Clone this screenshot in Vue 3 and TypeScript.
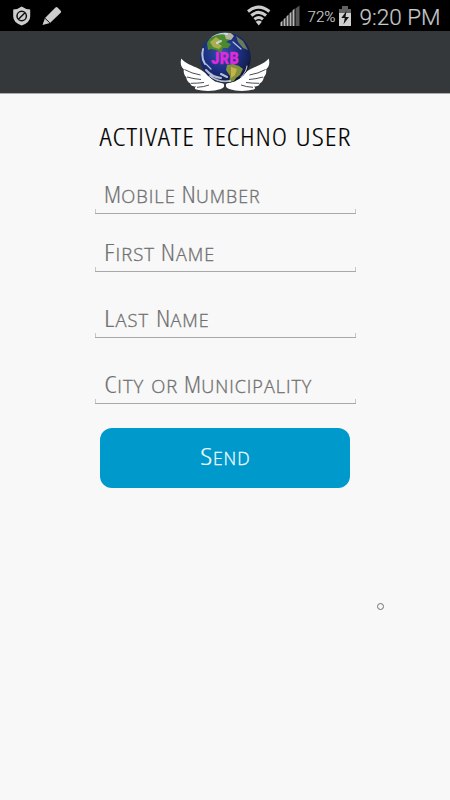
<script setup lang="ts">
interface Run {
    text: string;
    x: number;
    width: number;
    small?: boolean;
}

interface Field {
    name: string;
    label: string;
    runs: Run[];
}

// x and width are relative to the left edge of the field
const fields: Field[] = [
    {
        name: "mobile",
        label: "Mobile Number",
        runs: [
            { text: "M", x: 9, width: 17 },
            { text: "obile", x: 26.3, width: 54.5, small: true },
            { text: "N", x: 86.5, width: 14.3 },
            { text: "umber", x: 101, width: 64.5, small: true },
        ],
    },
    {
        name: "first",
        label: "First Name",
        runs: [
            { text: "F", x: 9, width: 10.5 },
            { text: "irst", x: 20.5, width: 39.5, small: true },
            { text: "N", x: 65.8, width: 14.3 },
            { text: "ame", x: 81, width: 39, small: true },
        ],
    },
    {
        name: "last",
        label: "Last Name",
        runs: [
            { text: "L", x: 9, width: 10.5 },
            { text: "ast", x: 20.5, width: 33.5, small: true },
            { text: "N", x: 61, width: 14.3 },
            { text: "ame", x: 75.5, width: 39, small: true },
        ],
    },
    {
        name: "city",
        label: "City or Municipality",
        runs: [
            { text: "C", x: 9.3, width: 12.5 },
            { text: "ity", x: 22.3, width: 27, small: true },
            { text: "or", x: 56.3, width: 27, small: true },
            { text: "M", x: 89, width: 17 },
            { text: "unicipality", x: 106.3, width: 111, small: true },
        ],
    },
];

const title: Run[] = [
    { text: "ACTIVATE", x: 4.5, width: 95.5 },
    { text: "TECHNO", x: 108.5, width: 84.5 },
    { text: "USER", x: 200.5, width: 56 },
];

const send: Run[] = [
    { text: "S", x: 100.3, width: 12 },
    { text: "end", x: 113, width: 37.5, small: true },
];
</script>

<template>
    <div class="screen">
        <div class="status">
            <svg class="notices" width="70" height="31" viewBox="0 0 70 31">
                <path d="M21.7 6.5q4 3 8.5 3v7q0 6-8.5 9q-8.500-3-8.500-9v-7q4.500 0 8.500-3z" fill="#cdcdcd" />
                <circle cx="21.7" cy="16" r="4.7" fill="none" stroke="#101010" stroke-width="1.5" />
                <path d="M18.4 19.3l6.6-6.6" stroke="#101010" stroke-width="1.5" />
                <path d="M42.5 25l2.5-7 10.500-10.500q1-.8 2 0l3.200 3.200q1 1 0 2L50 23z" fill="#cdcdcd" />
                <path d="M45 18.3l4.800 4.500" stroke="#111" stroke-width="1" />
            </svg>
            <svg class="signals" width="60" height="31" viewBox="0 0 60 31">
                <g fill="none" stroke="#cdcdcd" stroke-width="3">
                    <path d="M3 11.500q10.700-8.800 21.400 0" />
                    <path d="M6.300 15.500q7.400-6.300 14.800 0" />
                    <path d="M9.500 19.300q4.200-3.600 8.400 0" />
                </g>
                <path d="M10.700 21.700q3.100-2.300 6.200 0L13.800 25.500z" fill="#cdcdcd" />
                <g fill="#b8b8b8">
                    <path d="M35.500 26v-3.500l2-2V26zM38.500 26v-6.500l2-2V26zM41.500 26v-9.500l2-2V26zM44.500 26V13.500l2-2V26zM47.500 26V10.500l2-2V26z" />
                    <path d="M50.500 26V8.500L54.500 5.500V26z" fill="#555" />
                </g>
            </svg>
            <svg class="readout" width="150" height="31" viewBox="0 0 150 31">
                <text x="7.5" y="22" font-size="14.5" textLength="28" lengthAdjust="spacingAndGlyphs">72%</text>
                <path d="M42 6h6v3h-6zM39 9h12v4H39z" fill="#626262" />
                <path d="M39 13h12v13H39z" fill="#d0d0d0" />
                <path d="M46.500 11l-5.200 7h3.500l-1.300 6.300 5.500-7.400h-3.500z" fill="#111" />
                <text x="59.5" y="25" font-size="22.7" textLength="81" lengthAdjust="spacingAndGlyphs">9:20 PM</text>
            </svg>
        </div>

        <header class="bar">
            <svg width="90" height="62" viewBox="180 31 90 62">
                <defs>
                    <radialGradient id="sea" cx="42%" cy="38%" r="64%">
                        <stop offset="0" stop-color="#3450a5" />
                        <stop offset="0.6" stop-color="#1b2e80" />
                        <stop offset="0.88" stop-color="#152150" />
                        <stop offset="1" stop-color="#0a1030" />
                    </radialGradient>
                    <clipPath id="disc"><circle cx="225.5" cy="57.5" r="25" /></clipPath>
                    <g id="wing">
                        <path
                            d="M181.300 58.500c4 5 10 6.500 18 10.500c6 3 11 9 15 12c4 2 8 1.500 9.500 3c1 2 0 4-3 5c-7 2.500-17 2.500-24.500.5c-2-.7-2-2 0-3c-3 .3-6-1.200-6-3.300c-2-.7-4-3-4-6c-2-2-3-4.500-2.500-8c-3-2.500-3.800-6-2.500-10.700z"
                            fill="#fff"
                        />
                        <path d="M184.500 69.500q7 4 16 5.500M187 77q7 2 14 2.500M191 83.300q7 0 13-.8M197 87.300q7-.3 12-2.300" fill="none" stroke="#34383b" stroke-width=".9" />
                    </g>
                </defs>
                <use href="#wing" />
                <use href="#wing" transform="matrix(-1 0 0 1 450 0)" />
                <path d="M225 83v8" stroke="#34383b" stroke-width="1.5" />
                <circle cx="225.5" cy="57.5" r="25.3" fill="url(#sea)" />
                <g clip-path="url(#disc)">
                    <path d="M207 43l3-5 6-4 9-2 6 2 0 5-5 3 5 2-3 4-5 0-2 5-5-3-5-1-3 1z" fill="#4e8a30" />
                    <path d="M210 42l6-5 4 3-2 3 4 3-3 3-6-2z" fill="#a9ad50" />
                    <path d="M224 33l6-1 4 4-3 4-5-1z" fill="#b4b59a" />
                    <path d="M236 36l7 5 5 9-5-2-5-6z" fill="#6b7c58" />
                    <path d="M227 65l6-1 6 2 4 3-3 6-4 3-4 6-3 0 1-8-4-6z" fill="#82933c" />
                    <path d="M231 67l6 2-2 6-4 3z" fill="#c5b34a" />
                    <g fill="none" stroke="#dce7f2" stroke-linecap="round" opacity=".8">
                        <path d="M203 49q-2 9 2 15M206 70q6 7 15 8M210 76q9 7 20 5" stroke-width="2" />
                        <path d="M212 36q7-4 15-2M217 43l4-2M221 74l6 3" stroke-width="2" />
                        <path d="M233 42l8 7M241 77q5-4 6-11M206 64l5 5" stroke-width="1.2" />
                    </g>
                </g>
                <text class="logo" x="211.3" y="63.5" textLength="28" lengthAdjust="spacingAndGlyphs">JRB</text>
            </svg>
        </header>

        <main class="content">
            <h1 class="title" aria-label="Activate Techno User">
                <svg width="261" height="34">
                    <text v-for="run in title" :key="run.text" :x="run.x" y="25" :textLength="run.width" lengthAdjust="spacingAndGlyphs">{{ run.text }}</text>
                </svg>
            </h1>
            <form class="form" @submit.prevent>
                <div v-for="field in fields" :key="field.name" class="field" :class="field.name" :aria-label="field.label">
                    <svg width="261" height="29">
                        <text
                            v-for="run in field.runs"
                            :key="run.x"
                            :class="{ small: run.small }"
                            :x="run.x"
                            y="19"
                            :textLength="run.width"
                            lengthAdjust="spacingAndGlyphs"
                        >{{ run.text }}</text>
                    </svg>
                </div>
                <button class="send" type="submit">
                    <svg width="250" height="60">
                        <text v-for="run in send" :key="run.x" :class="{ small: run.small }" :x="run.x" y="37" :textLength="run.width" lengthAdjust="spacingAndGlyphs">{{ run.text }}</text>
                    </svg>
                </button>
            </form>
            <span class="dot"></span>
        </main>
    </div>
</template>

<style>
body {
    margin: 0;
}
</style>

<style scoped>
.screen {
    width: 450px;
    height: 800px;
    display: flex;
    flex-direction: column;
    overflow: hidden;
    background: #f8f8f8;
    font-family: "Open Sans", "Noto Sans", sans-serif;
}

svg {
    display: block;
    overflow: visible;
}

.status {
    height: 31px;
    display: flex;
    background: #000;
}

.signals {
    margin-left: 175px;
}

.readout {
    margin-left: -5px;
    fill: #c9c9c9;
    font-family: Roboto, sans-serif;
    font-weight: 300;
    stroke-width: 0.2px;
}

.readout text {
    stroke: #c9c9c9;
}

.bar {
    height: 62px;
    flex: none;
    display: flex;
    justify-content: center;
    background: #34383b;
    border-bottom: 1px solid #aaacad;
}

.logo {
    fill: #e22be1;
    stroke: #d32ad4;
    stroke-width: 0.4px;
    font: 900 17px Roboto, sans-serif;
    letter-spacing: 0.6px;
}

.content {
    display: flex;
    flex-direction: column;
    align-items: center;
}

.title {
    margin: 27px 0 0;
    font-size: 25.5px;
    font-weight: 300;
    font-stretch: 76%;
    letter-spacing: 0.8px;
}

.title text {
    fill: #000;
    stroke: #000;
    stroke-width: 0.15px;
}

.form {
    display: flex;
    flex-direction: column;
    align-items: center;
}

.field {
    box-sizing: border-box;
    width: 261px;
    height: 30px;
    border-bottom: 1px solid #a9a9a9;
    background:
        linear-gradient(#c8c8c8, #c8c8c8) left bottom / 1px 4px no-repeat,
        linear-gradient(#c8c8c8, #c8c8c8) right bottom / 1px 4px no-repeat;
    font-size: 23.5px;
    font-weight: 300;
    font-stretch: 80%;
}

.field text {
    fill: #707070;
    stroke: #707070;
    stroke-width: 0.15px;
}

.field .small {
    stroke-width: 0.35px;
}

.small {
    font-size: 18.8px;
    font-stretch: 88%;
    letter-spacing: 1px;
    text-transform: uppercase;
}

.mobile {
    margin-top: 29px;
}

.first {
    margin-top: 28px;
}

.last,
.city {
    margin-top: 36px;
}

.send {
    width: 250px;
    height: 60px;
    margin-top: 24px;
    padding: 0;
    border: 0;
    border-radius: 12px;
    background: #0099cc;
    font: 300 23.5px "Open Sans", sans-serif;
    font-stretch: 80%;
}

.send text {
    fill: #f2fbff;
    stroke: #f2fbff;
    stroke-width: 0.2px;
}

.send .small {
    stroke-width: 0.35px;
}

.dot {
    box-sizing: border-box;
    width: 7px;
    height: 7px;
    margin: 115px 0 0 311px;
    border: 1px solid #68717a;
    border-radius: 50%;
}
</style>
